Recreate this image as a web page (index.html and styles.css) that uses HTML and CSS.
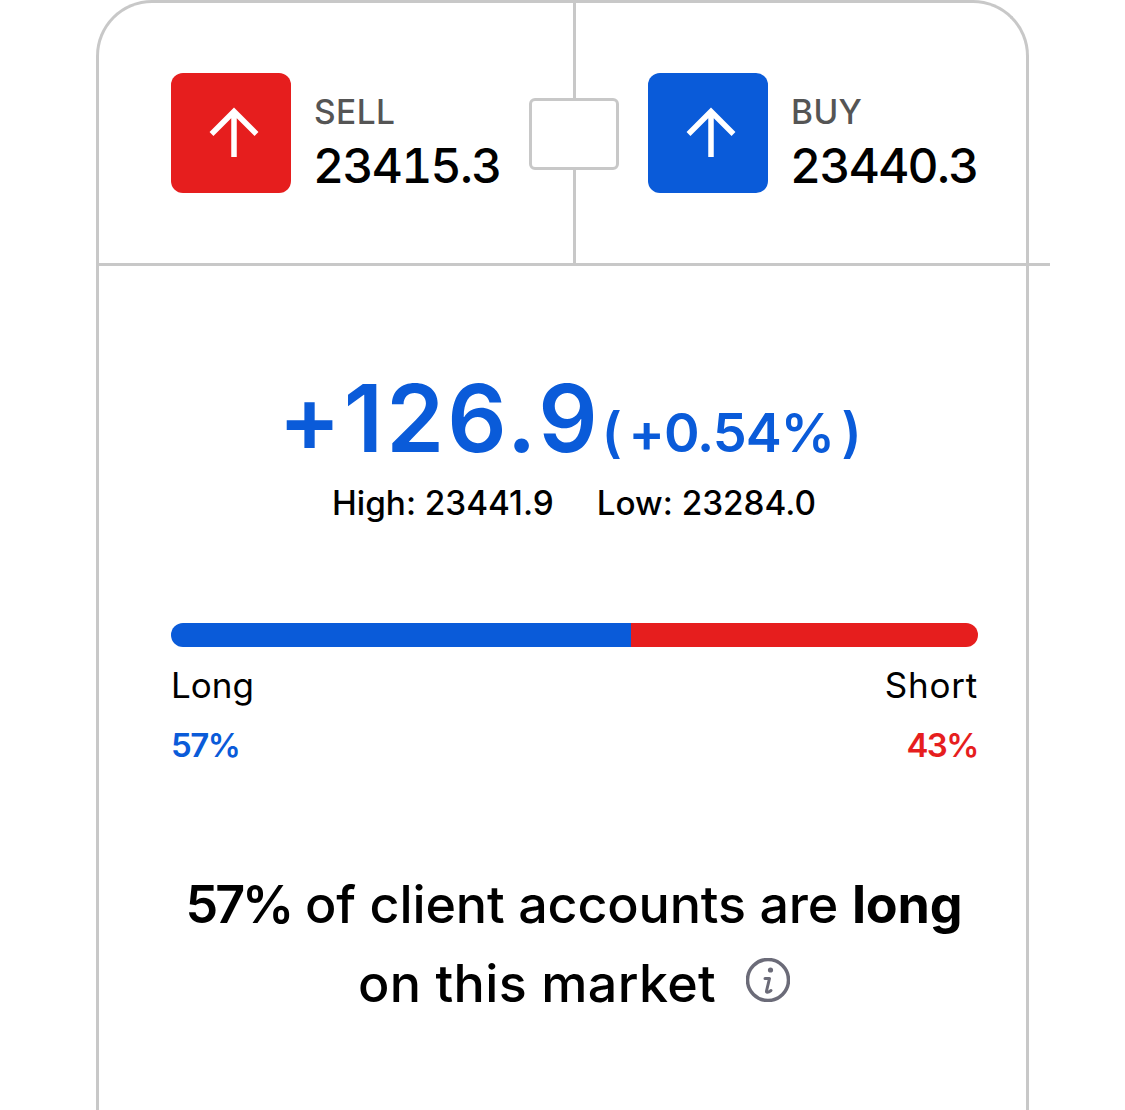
FILE: index.html
```html
<!DOCTYPE html>
<html lang="en">
<head>
<meta charset="utf-8">
<title>Market</title>
<link rel="stylesheet" href="styles.css">
</head>
<body>
<main class="card">
  <section class="quotes">
    <div class="quote quote-sell">
      <div class="tile tile-red">
        <svg class="arrow" viewBox="0 0 48 48"><path d="M24 48V2M1.500 25 24 2.500 46.500 25" fill="none" stroke="#fff" stroke-width="5.500"/></svg>
      </div>
      <div class="quote-text">
        <span class="quote-label">SELL</span>
        <span class="quote-price">23415.3</span>
      </div>
    </div>
    <div class="quote quote-buy">
      <div class="tile tile-blue">
        <svg class="arrow" viewBox="0 0 48 48"><path d="M24 48V2M1.500 25 24 2.500 46.500 25" fill="none" stroke="#fff" stroke-width="5.500"/></svg>
      </div>
      <div class="quote-text">
        <span class="quote-label">BUY</span>
        <span class="quote-price">23440.3</span>
      </div>
    </div>
    <div class="spread"></div>
  </section>
  <section class="change">
    <div class="change-line">
      <span class="change-value">+126.9</span>
      <span class="change-pct">( +0.54% )</span>
    </div>
    <div class="range">
      <span>High: 23441.9</span>
      <span>Low: 23284.0</span>
    </div>
  </section>
  <section class="sentiment">
    <div class="bar">
      <div class="bar-long" style="width:57%"></div>
      <div class="bar-short"></div>
    </div>
    <div class="legend">
      <span>Long</span>
      <span class="legend-short">Short</span>
    </div>
    <div class="legend legend-pct">
      <span class="pct-long">57%</span>
      <span class="pct-short">43%</span>
    </div>
  </section>
  <p class="summary">
    <span class="summary-line summary-first"><span class="semi">57%</span> of client accounts are <b>long</b></span>
    <span class="summary-line summary-second">on this market<svg class="info" viewBox="0 0 44 44"><circle cx="22" cy="22" r="20.500" fill="none" stroke="#6b6b78" stroke-width="3.500"/><circle cx="24.500" cy="12" r="2.600" fill="#6b6b78"/><path d="M19 20.500h4.500l-3 12.500c-.4 1.800 1.300 2 4.500-.5" fill="none" stroke="#6b6b78" stroke-width="3" stroke-linecap="round" stroke-linejoin="round"/></svg></span>
  </p>
</main>
</body>
</html>
```
FILE: styles.css
```css
* { box-sizing: border-box; }
html, body { margin: 0; background: #fff; }
body {
  height: 1110px;
  overflow: hidden;
  font-family: "Inter", "Liberation Sans", sans-serif;
  color: #000;
}
.card {
  position: relative;
  width: 933px;
  height: 1110px;
  margin-left: 96px;
  border: 3px solid #c8c8c8;
  border-bottom: 0;
  border-radius: 56px 56px 0 0;
}
.quotes {
  position: relative;
  display: grid;
  grid-template-columns: 477px 1fr;
  height: 260px;
}
.quotes::after {
  content: "";
  position: absolute;
  left: 0;
  right: -24px;
  bottom: -3px;
  height: 3px;
  background: #c8c8c8;
}
.quote {
  display: flex;
  align-items: center;
  gap: 23px;
  padding-left: 72px;
}
.quote-sell { border-right: 3px solid #c8c8c8; }
.tile {
  display: flex;
  align-items: center;
  justify-content: center;
  width: 120px;
  height: 120px;
  border-radius: 12px;
  flex: none;
}
.tile-red { background: #e61e1e; }
.tile-blue { background: #0a5bd9; }
.arrow { width: 48px; height: 48px; margin-left: 6px; overflow: visible; }
.quote-text { display: flex; flex-direction: column; padding-top: 26px; }
.quote-label {
  font-size: 33.500px;
  line-height: 40px;
  font-weight: 500;
  letter-spacing: .4px;
  color: #555;
}
.quote-price {
  margin-left: -1px;
  font-size: 48px;
  line-height: 68px;
  font-weight: 500;
  font-feature-settings: "tnum";
  letter-spacing: -1.700px;
}
.spread {
  position: absolute;
  left: 430px;
  top: 95px;
  width: 90px;
  height: 72px;
  background: #fff;
  border: 3px solid #c8c8c8;
  border-radius: 6px;
}
.change { padding: 105px 0 0 23px; text-align: center; }
.change-line {
  display: flex;
  justify-content: center;
  align-items: baseline;
  gap: 1px;
  padding-right: 9px;
  color: #0a5bd9;
  font-weight: 600;
}
.change-value { font-size: 93px; line-height: 100px; letter-spacing: 3px; }
.change-pct { font-size: 54px; line-height: 100px; letter-spacing: -1px; word-spacing: -5px; }
.range {
  display: flex;
  justify-content: center;
  gap: 43px;
  font-size: 33.300px;
  line-height: 40px;
  font-weight: 500;
}
.sentiment { padding: 100px 48px 0 72px; }
.bar {
  display: flex;
  height: 24px;
  border-radius: 12px;
  overflow: hidden;
}
.bar-long { background: #0a5bd9; }
.bar-short { flex: 1; background: #e61e1e; }
.legend {
  display: flex;
  justify-content: space-between;
  font-size: 35px;
  line-height: 40px;
  margin-top: 18px;
}
.legend-short { letter-spacing: .8px; }
.legend-pct { font-size: 33px; font-weight: 600; letter-spacing: -1.500px; margin-top: 20px; }
.pct-long { color: #0a5bd9; }
.pct-short { color: #e61e1e; }
.summary {
  display: flex;
  flex-direction: column;
  align-items: center;
  margin: 100px 0 0;
  padding-left: 23px;
  font-size: 52px;
  line-height: 79px;
  font-weight: 500;
}
.summary-line { display: block; white-space: nowrap; }
.summary-first { letter-spacing: -.15px; }
.summary-second { letter-spacing: .35px; }
.semi { font-weight: 600; letter-spacing: -3px; }
.summary b { font-weight: 700; }
.info { display: inline-block; width: 44px; height: 44px; margin-left: 30px; vertical-align: 0; }
```
